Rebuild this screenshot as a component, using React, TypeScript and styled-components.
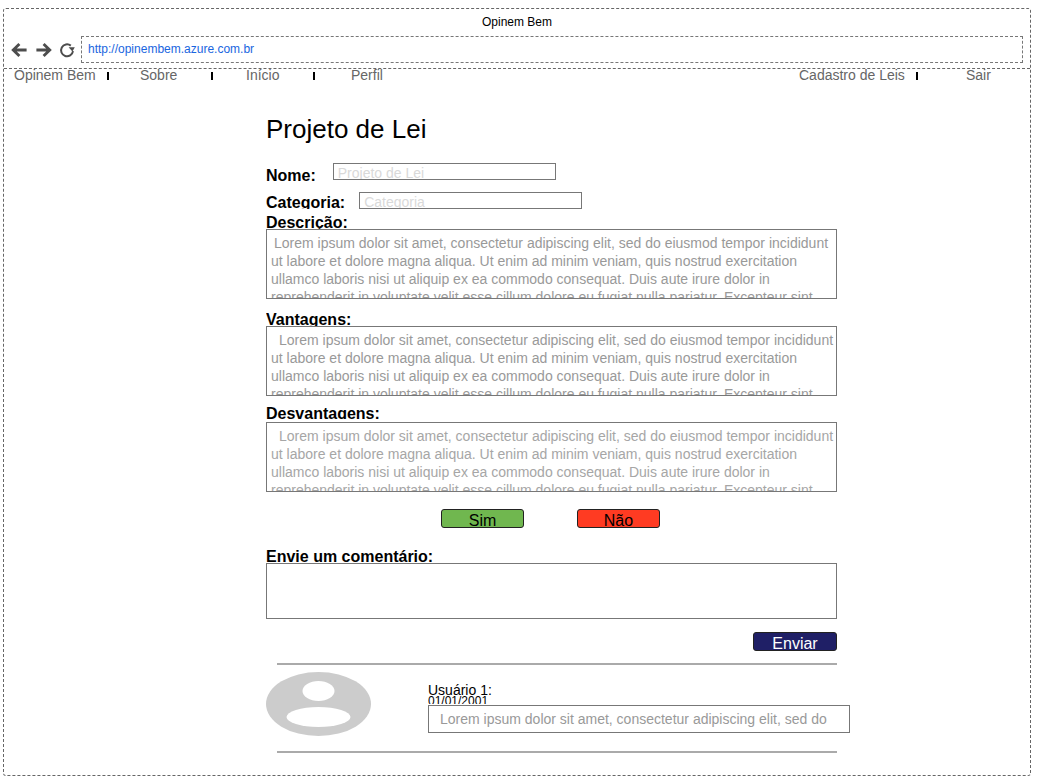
import React from "react";
import styled, { createGlobalStyle } from "styled-components";

const Global = createGlobalStyle`
  html, body { margin: 0; padding: 0; background: #fff; }
  body { font-family: "Liberation Sans", Arial, sans-serif; color: #000; }
  * { box-sizing: border-box; }
`;

const Page = styled.div`
  width: 1041px;
  height: 784px;
  padding: 8px 0 0 3px;
  overflow: hidden;
`;

const Window = styled.div`
  width: 1028px;
  height: 768px;
  border: 1px dashed #666;
  border-radius: 3px;
  display: flex;
  flex-direction: column;
`;

const Chrome = styled.header`
  height: 60px;
  border-bottom: 1px dashed #666;
  padding: 0 7px 0 7px;
  display: flex;
  flex-direction: column;
`;

const WindowTitle = styled.div`
  height: 27px;
  font-size: 12px;
  line-height: 27px;
  text-align: center;
`;

const AddressRow = styled.div`
  display: flex;
  align-items: center;
  height: 27px;
`;

const NavIcon = styled.svg<{ $ml: number }>`
  width: 16px;
  height: 16px;
  margin-left: ${(p) => p.$ml}px;
  flex: none;
  fill: #4d4d4d;
`;

const Address = styled.div`
  width: 942px;
  height: 27px;
  margin-left: 6px;
  border: 1px dashed #777;
  padding-left: 6px;
  font-size: 12px;
  line-height: 25px;
  color: #1a66e0;
`;

const NavBar = styled.nav`
  height: 14px;
  display: flex;
  justify-content: space-between;
  padding: 0 38px 0 10px;
  font-size: 14px;
  line-height: 12px;
  color: #666;
`;

const NavGroup = styled.div`
  display: flex;
`;

const NavCell = styled.div<{ $w: number; $pl?: number }>`
  width: ${(p) => p.$w}px;
  padding-left: ${(p) => p.$pl ?? 0}px;
  display: flex;
  justify-content: space-between;
  align-items: flex-start;
`;

const NavSep = styled.span`
  width: 2px;
  height: 8px;
  margin-top: 3px;
  background: #000;
`;

const Main = styled.main`
  width: 586px;
  margin-left: 262px;
  display: flex;
  flex-direction: column;
`;

const Title = styled.h1`
  margin: 30px 0 0;
  font-size: 26px;
  font-weight: 400;
  line-height: 32px;
  height: 30px;
`;

const InlineField = styled.div<{ $mt: number; $gap: number }>`
  display: flex;
  align-items: flex-start;
  gap: ${(p) => p.$gap}px;
  margin-top: ${(p) => p.$mt}px;
`;

const Label = styled.label<{ $mt?: number; $mb?: number; $h?: number }>`
  display: block;
  font-size: 16px;
  font-weight: 700;
  line-height: 17px;
  height: ${(p) => p.$h ?? 15}px;
  margin-top: ${(p) => p.$mt ?? 0}px;
  margin-bottom: ${(p) => p.$mb ?? 0}px;
  overflow: hidden;
`;

const SmallInput = styled.div`
  width: 223px;
  height: 17px;
  border: 1px solid #777;
  padding-left: 4px;
  font-size: 14px;
  line-height: 19px;
  color: #d9d9d9;
  overflow: hidden;
`;

const TextBox = styled.div<{ $indent?: number; $color?: string; $h?: number }>`
  width: 571px;
  height: ${(p) => p.$h ?? 70}px;
  border: 1px solid #777;
  padding: 4px 0 0 4px;
  font-size: 14px;
  line-height: 18px;
  color: ${(p) => p.$color ?? "#999"};
  text-indent: ${(p) => p.$indent ?? 3}px;
  overflow: hidden;
`;

const VoteRow = styled.div`
  display: flex;
  gap: 53px;
  margin: 17px 0 0 175px;
`;

const Button = styled.button<{ $bg: string; $fg?: string; $w?: number }>`
  width: ${(p) => p.$w ?? 83}px;
  height: 19px;
  padding: 1px 0 0;
  border: 1px solid #222;
  border-radius: 3px;
  background: ${(p) => p.$bg};
  color: ${(p) => p.$fg ?? "#000"};
  font-family: inherit;
  font-size: 16px;
  line-height: 19px;
  overflow: hidden;
`;

const SendRow = styled.div`
  width: 571px;
  display: flex;
  justify-content: flex-end;
  margin-top: 13px;
`;

const Divider = styled.hr<{ $mt: number }>`
  width: 560px;
  height: 2px;
  margin: ${(p) => p.$mt}px 0 0 11px;
  border: 0;
  background: #aaa;
`;

const Comment = styled.div`
  display: flex;
  margin-top: 7px;
  height: 79px;
`;

const Avatar = styled.svg`
  width: 105px;
  height: 64px;
  flex: none;
`;

const CommentBody = styled.div`
  margin: 11px 0 0 57px;
`;

const UserName = styled.div`
  font-size: 14px;
  line-height: 14px;
  height: 11px;
`;

const CommentDate = styled.div`
  font-size: 12px;
  line-height: 15px;
  height: 10px;
  margin-bottom: 1px;
  overflow: hidden;
`;

const CommentText = styled.div`
  width: 422px;
  height: 28px;
  border: 1px solid #777;
  padding-left: 11px;
  font-size: 14px;
  line-height: 26px;
  color: #999;
  white-space: nowrap;
  overflow: hidden;
  background: #fff;
`;

const LOREM =
  "Lorem ipsum dolor sit amet, consectetur adipiscing elit, sed do eiusmod tempor incididunt ut labore et dolore magna aliqua. Ut enim ad minim veniam, quis nostrud exercitation ullamco laboris nisi ut aliquip ex ea commodo consequat. Duis aute irure dolor in reprehenderit in voluptate velit esse cillum dolore eu fugiat nulla pariatur. Excepteur sint occaecat cupidatat non proident.";

export default function App() {
  return (
    <Page>
      <Global />
      <Window>
        <Chrome>
          <WindowTitle>Opinem Bem</WindowTitle>
          <AddressRow>
            <NavIcon $ml={0} viewBox="0 0 16 16">
              <path d="M7.4.9 9.4 2.9 5.8 6.4H15.6V9.6H5.8L9.4 13.1 7.4 15.1 .2 8Z" />
            </NavIcon>
            <NavIcon $ml={9} viewBox="0 0 16 16">
              <path d="M8.6.9 6.6 2.9 10.2 6.4H.4V9.6H10.2L6.6 13.1 8.6 15.1 15.8 8Z" />
            </NavIcon>
            <NavIcon $ml={7} viewBox="0 0 16 16">
              <path d="M11.8 3.6A6 6 0 1 0 14 9.2" fill="none" stroke="#4d4d4d" strokeWidth="2" />
              <path d="M9.6 5.2H15.8L13.4 9.4Z" />
            </NavIcon>
            <Address>http://opinembem.azure.com.br</Address>
          </AddressRow>
        </Chrome>
        <NavBar>
          <NavGroup>
            <NavCell $w={95}>Opinem Bem<NavSep /></NavCell>
            <NavCell $w={104} $pl={31}>Sobre<NavSep /></NavCell>
            <NavCell $w={102} $pl={33}>Início<NavSep /></NavCell>
            <NavCell $w={60} $pl={36}>Perfil</NavCell>
          </NavGroup>
          <NavGroup>
            <NavCell $w={119}>Cadastro de Leis<NavSep /></NavCell>
            <NavCell $w={74} $pl={48}>Sair</NavCell>
          </NavGroup>
        </NavBar>
        <Main>
          <Title>Projeto de Lei</Title>
          <InlineField $mt={20} $gap={17}>
            <Label $mt={4} $h={17}>Nome:</Label>
            <SmallInput>Projeto de Lei</SmallInput>
          </InlineField>
          <InlineField $mt={8} $gap={14}>
            <Label $mt={2} $h={15}>Categoria:</Label>
            <SmallInput>Categoria</SmallInput>
          </InlineField>
          <Label $mt={5} $h={15}>Descrição:</Label>
          <TextBox>{LOREM}</TextBox>
          <Label $mt={12} $h={15}>Vantagens:</Label>
          <TextBox $indent={8} $color="#999">{LOREM}</TextBox>
          <Label $mt={9} $mb={3} $h={14}>Desvantagens:</Label>
          <TextBox $indent={8} $color="#a6a6a6">{LOREM}</TextBox>
          <VoteRow>
            <Button $bg="#70b74f">Sim</Button>
            <Button $bg="#ff3b22">Não</Button>
          </VoteRow>
          <Label $mt={20} $h={15}>Envie um comentário:</Label>
          <TextBox $h={56} />
          <SendRow>
            <Button $bg="#1f1f66" $fg="#fff" $w={84}>Enviar</Button>
          </SendRow>
          <Divider $mt={12} />
          <Comment>
            <Avatar viewBox="0 0 105 64">
              <ellipse cx="52.5" cy="32" rx="52.5" ry="32" fill="#cccccc" />
              <ellipse cx="52.5" cy="19" rx="16" ry="10" fill="#fff" />
              <ellipse cx="52.5" cy="45" rx="32" ry="10" fill="#fff" />
            </Avatar>
            <CommentBody>
              <UserName>Usuário 1:</UserName>
              <CommentDate>01/01/2001</CommentDate>
              <CommentText>Lorem ipsum dolor sit amet, consectetur adipiscing elit, sed do</CommentText>
            </CommentBody>
          </Comment>
          <Divider $mt={0} />
        </Main>
      </Window>
    </Page>
  );
}
